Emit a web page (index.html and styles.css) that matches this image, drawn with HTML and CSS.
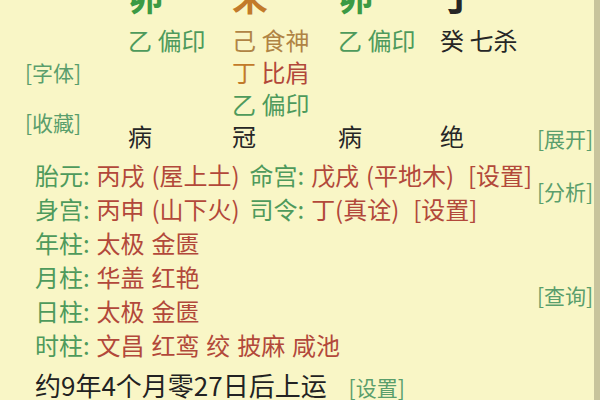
FILE: index.html
```html
<!DOCTYPE html>
<html lang="zh">

<head>
    <meta charset="UTF-8">
    <meta name="viewport" content="width=device-width, initial-scale=1.0">
    <title>排盘</title>
    <link rel="stylesheet" href="styles.css">
</head>

<body>
    <div class="page">
        <div class="main">
            <div class="top">
                <div class="tools tools-left">
                    <span class="tool">[字体]</span>
                    <span class="tool">[收藏]</span>
                </div>
                <div class="pillars">
                    <span class="stem green">卯</span>
                    <span class="stem orange">未</span>
                    <span class="stem green">卯</span>
                    <span class="stem dark">丁</span>

                    <span class="cell green">乙 偏印</span>
                    <span class="cell brown">己 食神</span>
                    <span class="cell green">乙 偏印</span>
                    <span class="cell dark">癸 七杀</span>

                    <span class="cell"></span>
                    <span class="cell"><span class="orange">丁</span> <span class="red">比肩</span></span>
                    <span class="cell"></span>
                    <span class="cell"></span>

                    <span class="cell"></span>
                    <span class="cell green">乙 偏印</span>
                    <span class="cell"></span>
                    <span class="cell"></span>

                    <span class="cell dark">病</span>
                    <span class="cell dark">冠</span>
                    <span class="cell dark">病</span>
                    <span class="cell dark">绝</span>
                </div>
            </div>

            <div class="details">
                <div class="row"><span class="lbl">胎元:</span> <span class="val">丙戌 (屋上土)</span> <span class="lbl sep">命宫:</span> <span class="val">戊戌 (平地木)</span>&nbsp; <span class="val">[设置]</span></div>
                <div class="row"><span class="lbl">身宫:</span> <span class="val">丙申 (山下火)</span> <span class="lbl sep">司令:</span> <span class="val">丁(真诠)</span>&nbsp; <span class="val">[设置]</span></div>
                <div class="row"><span class="lbl">年柱:</span> <span class="val">太极 金匮</span></div>
                <div class="row"><span class="lbl">月柱:</span> <span class="val">华盖 红艳</span></div>
                <div class="row"><span class="lbl">日柱:</span> <span class="val">太极 金匮</span></div>
                <div class="row"><span class="lbl">时柱:</span> <span class="val">文昌 红鸾 绞 披麻 咸池</span></div>
            </div>

            <div class="luck">约9年4个月零27日后上运 <span class="tool">[设置]</span></div>
        </div>

        <div class="tools tools-right">
            <span class="tool">[展开]</span>
            <span class="tool tool-analyse">[分析]</span>
            <span class="tool tool-query">[查询]</span>
        </div>

        <div class="edge"></div>
    </div>
</body>

</html>
```

FILE: styles.css
```css
* {
    margin: 0;
    padding: 0;
    box-sizing: border-box;
}

body,
html {
    width: 100%;
    height: 100%;
    background-color: #F9F6C6;
    font-family: "Noto Sans CJK SC", "Noto Sans", sans-serif;
    overflow: hidden;
}

.page {
    display: flex;
    height: 400px;
    overflow: hidden;
}

.main {
    width: 537px;
    flex-shrink: 0;
}

.top {
    display: flex;
    margin-top: -22px;
}

.tools {
    display: flex;
    flex-direction: column;
}

.tool {
    font-size: 21px;
    line-height: 24px;
    color: #5A9E6C;
    white-space: nowrap;
}

.tools-left {
    width: 128px;
    flex-shrink: 0;
    padding-left: 25px;
    padding-top: 82px;
    gap: 26px;
}

.pillars {
    flex: 1;
    display: grid;
    grid-template-columns: 104px 106px 102px auto;
    grid-template-rows: 46px repeat(4, 32px);
}

.stem {
    font-size: 36px;
    line-height: 34px;
    font-weight: bold;
}

.cell {
    font-size: 24px;
    line-height: 32px;
    white-space: nowrap;
}

.green {
    color: #4E9A5C;
}

.orange {
    color: #C27A2A;
}

.brown {
    color: #B08444;
}

.red {
    color: #B2483A;
}

.dark {
    color: #262626;
}

.stem.green {
    color: #3C9A44;
}

.details {
    margin-top: 6px;
    padding-left: 35px;
}

.row {
    font-size: 24px;
    line-height: 34px;
    white-space: nowrap;
    word-spacing: 1.5px;
}

.lbl {
    color: #4E9A5C;
}

.val {
    color: #B2483A;
}

.sep {
    margin-left: 3px;
}

.luck {
    margin-top: 6px;
    padding-left: 35px;
    font-size: 26px;
    line-height: 34px;
    color: #222;
    white-space: nowrap;
}

.luck .tool {
    font-size: 21px;
    margin-left: 16px;
}

.tools-right {
    flex: 1;
    padding-top: 126px;
}

.tool-analyse {
    margin-top: 29px;
}

.tool-query {
    margin-top: 80px;
}

.edge {
    width: 6px;
    flex-shrink: 0;
    background-color: #C8C49C;
}
```
